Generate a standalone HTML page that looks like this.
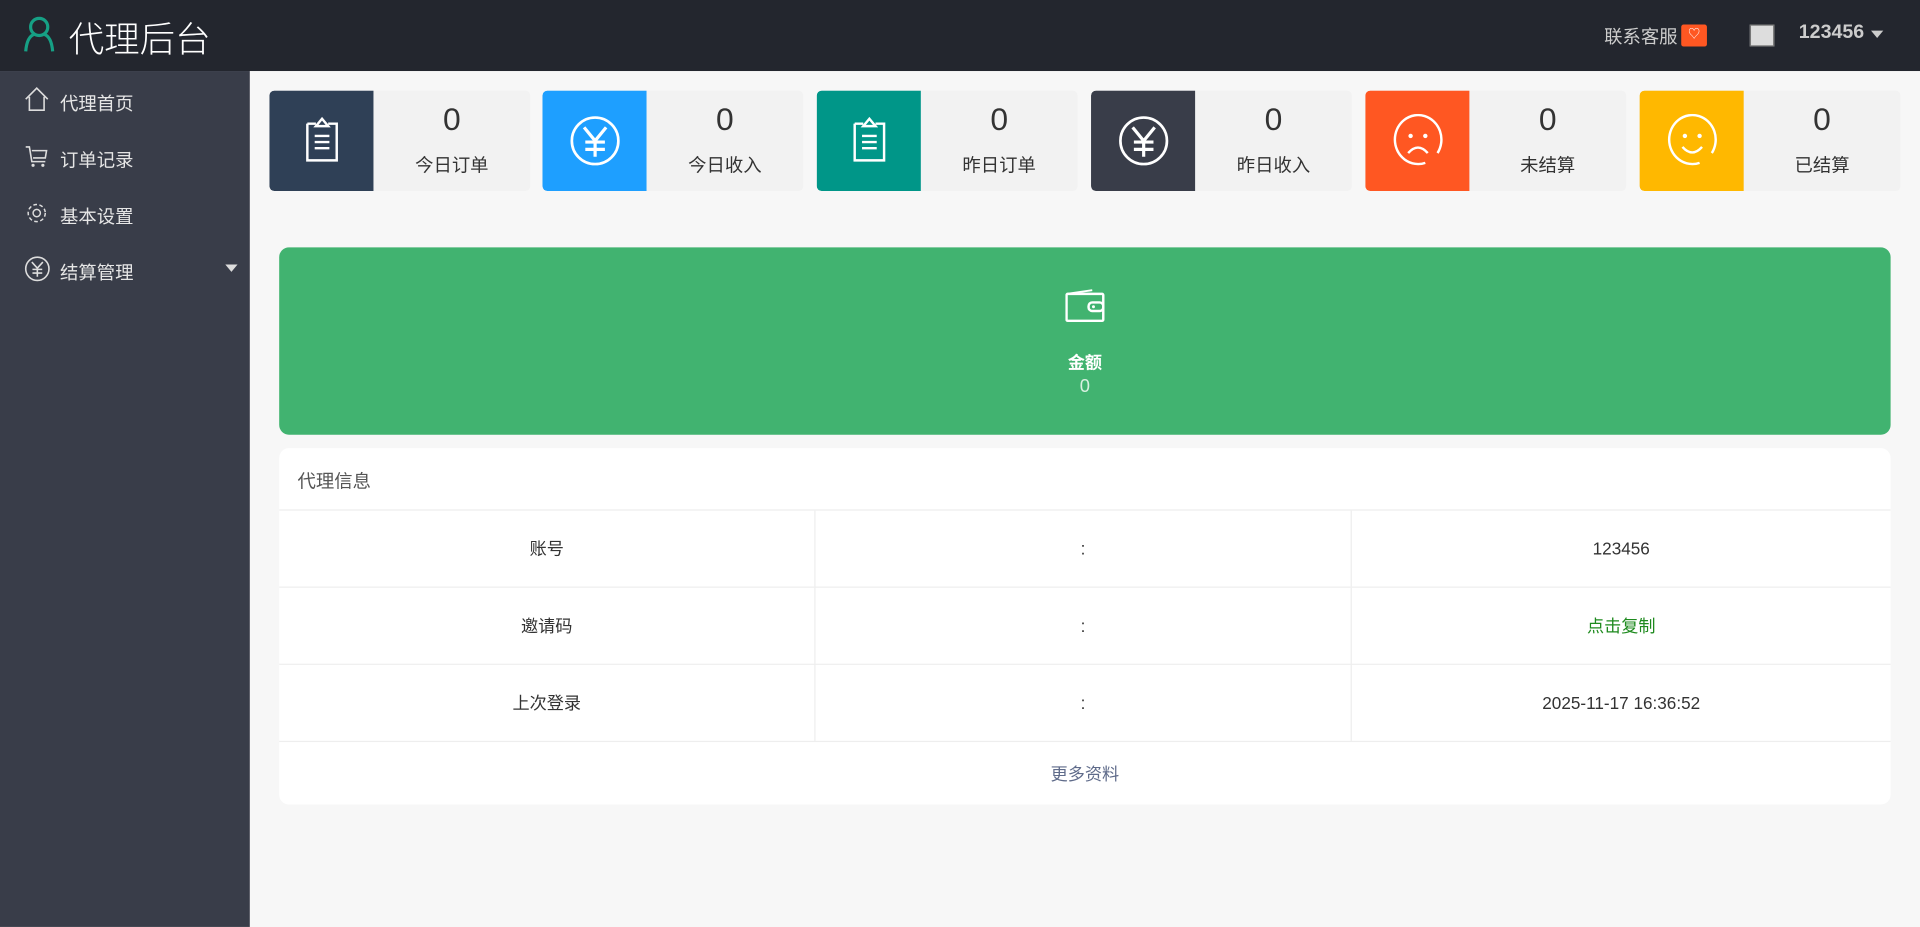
<!DOCTYPE html>
<html><head><meta charset="utf-8"><style>
*{margin:0;padding:0;box-sizing:border-box}
html,body{width:1920px;height:927px;overflow:hidden;background:#f7f7f7}
#w{width:1568px;height:757px;transform:scale(1.22449);transform-origin:0 0;position:relative;font-family:"Liberation Sans","Noto Sans CJK SC",sans-serif;background:#f7f7f7}
.hd{position:absolute;left:0;top:0;width:1568px;height:58px;background:#23262e;color:#fff}
.logo{position:absolute;left:56px;top:9px;font-size:29px;color:#fff;font-weight:300}
.sb{position:absolute;left:0;top:58px;width:204px;height:699px;background:#393d49}
.mi{position:absolute;left:49px;font-size:15px;color:#e6e6e6}
.ic{position:absolute;left:20px}
.card{position:absolute;top:74px;width:213px;height:82px;background:#f2f2f2;border-radius:4px;overflow:hidden}
.card .b{position:absolute;left:0;top:0;width:85px;height:82px;border-radius:4px 0 0 4px}
.card .n{position:absolute;left:85px;right:0;top:8px;text-align:center;font-size:26px;color:#333}
.card .t{position:absolute;left:85px;right:0;top:50px;text-align:center;font-size:15px;color:#333}
.card svg{position:absolute;left:21px;top:19px}
.green{position:absolute;left:228px;top:202px;width:1316px;height:153px;background:#41b370;border-radius:8px;color:#fff;text-align:center}
.info{position:absolute;left:228px;top:366px;width:1316px;height:291px;background:#fff;border-radius:8px}
.row{position:absolute;left:0;width:1316px;height:63px;border-top:1px solid #eee;font-size:14px;color:#333}
.row div{position:absolute;top:0;height:63px;line-height:63px;text-align:center}
.c1{left:0;width:438px;border-right:1px solid #eee}.c2{left:438px;width:438px;border-right:1px solid #eee}.c3{left:876px;width:440px}
</style></head><body><div id="w">
<div class="hd">
<svg style="position:absolute;left:19px;top:13px" width="26" height="30" viewBox="0 0 26 30"><circle cx="13" cy="9" r="7" fill="none" stroke="#16a085" stroke-width="2.6"/><path d="M2 29 Q3 17 9 15 M24 29 Q23 17 17 15" fill="none" stroke="#16a085" stroke-width="2.6"/></svg>
<div class="logo">代理后台</div>
<div style="position:absolute;left:1310px;top:19px;font-size:15px;color:#ccc">联系客服</div>
<div style="position:absolute;left:1373px;top:20px;width:21px;height:18px;background:#ff5722;border-radius:2px;color:#fff;font-size:10px;text-align:center;line-height:18px">♡</div>
<div style="position:absolute;left:1429px;top:20px;width:20px;height:18px;border:1px solid #777;background:#ddd"></div>
<div style="position:absolute;left:1469px;top:18px;font-size:16px;font-weight:bold;color:#ccc">123456</div>
<div style="position:absolute;left:1528px;top:25px;border:5px solid transparent;border-top:6px solid #ccc"></div>
</div>
<div class="sb">
<svg class="ic" style="top:13px" width="20" height="20" viewBox="0 0 20 20"><path d="M1 10 L10 1 L19 10 M4 8 V19 H16 V8" fill="none" stroke="#ddd" stroke-width="1.3"/></svg>
<div class="mi" style="top:16px">代理首页</div>
<svg class="ic" style="top:60px" width="20" height="20" viewBox="0 0 20 20"><path d="M1 2 H4 L6 14 H17 M6 5 H18 L17 11 H7" fill="none" stroke="#ddd" stroke-width="1.3"/><circle cx="7" cy="17" r="1.3" fill="#ddd"/><circle cx="15" cy="17" r="1.3" fill="#ddd"/></svg>
<div class="mi" style="top:62px">订单记录</div>
<svg class="ic" style="top:106px" width="20" height="20" viewBox="0 0 20 20"><circle cx="10" cy="10" r="3" fill="none" stroke="#ddd" stroke-width="1.2"/><circle cx="10" cy="10" r="7" fill="none" stroke="#ddd" stroke-width="1.2" stroke-dasharray="3 2"/></svg>
<div class="mi" style="top:108px">基本设置</div>
<svg class="ic" style="top:151px" width="21" height="21" viewBox="0 0 21 21"><circle cx="10.5" cy="10.5" r="9.5" fill="none" stroke="#ddd" stroke-width="1.3"/><path d="M6 5 L10.5 10 L15 5 M10.5 10 V17 M6.5 11 H14.5 M6.5 14 H14.5" fill="none" stroke="#ddd" stroke-width="1.3"/></svg>
<div class="mi" style="top:154px">结算管理</div>
<div style="position:absolute;left:184px;top:158px;border:5px solid transparent;border-top:6px solid #ddd"></div>
</div>

<div class="card" style="left:220px"><div class="b" style="background:#2f4056"><svg width="44" height="44" viewBox="0 0 44 44"><path d="M10 8 H17 M27 8 H34 V38 H10 V8" fill="none" stroke="#fff" stroke-width="2"/><path d="M17 10 L22 4 L27 10 Z" fill="none" stroke="#fff" stroke-width="2"/><path d="M16 18 H28 M16 23 H28 M16 28 H28" stroke="#fff" stroke-width="2"/></svg></div><div class="n">0</div><div class="t">今日订单</div></div>
<div class="card" style="left:443px"><div class="b" style="background:#1e9fff"><svg width="44" height="44" viewBox="0 0 44 44"><circle cx="22" cy="22" r="19" fill="none" stroke="#fff" stroke-width="2.2"/><path d="M13 11 L22 22 L31 11 M22 22 V35 M14 23 H30 M14 29 H30" fill="none" stroke="#fff" stroke-width="2.6"/></svg></div><div class="n">0</div><div class="t">今日收入</div></div>
<div class="card" style="left:667px"><div class="b" style="background:#009688"><svg width="44" height="44" viewBox="0 0 44 44"><path d="M10 8 H17 M27 8 H34 V38 H10 V8" fill="none" stroke="#fff" stroke-width="2"/><path d="M17 10 L22 4 L27 10 Z" fill="none" stroke="#fff" stroke-width="2"/><path d="M16 18 H28 M16 23 H28 M16 28 H28" stroke="#fff" stroke-width="2"/></svg></div><div class="n">0</div><div class="t">昨日订单</div></div>
<div class="card" style="left:891px"><div class="b" style="background:#393d49"><svg width="44" height="44" viewBox="0 0 44 44"><circle cx="22" cy="22" r="19" fill="none" stroke="#fff" stroke-width="2.2"/><path d="M13 11 L22 22 L31 11 M22 22 V35 M14 23 H30 M14 29 H30" fill="none" stroke="#fff" stroke-width="2.6"/></svg></div><div class="n">0</div><div class="t">昨日收入</div></div>
<div class="card" style="left:1115px"><div class="b" style="background:#ff5722"><svg width="44" height="44" viewBox="0 0 44 44"><path d="M28 40 A19 20 0 1 1 38 32" fill="none" stroke="#fff" stroke-width="2"/><circle cx="16" cy="18" r="1.8" fill="#fff"/><circle cx="28" cy="18" r="1.8" fill="#fff"/><path d="M14 32 Q22 23 30 32" fill="none" stroke="#fff" stroke-width="2"/></svg></div><div class="n">0</div><div class="t">未结算</div></div>
<div class="card" style="left:1339px"><div class="b" style="background:#ffb800"><svg width="44" height="44" viewBox="0 0 44 44"><path d="M28 40 A19 20 0 1 1 38 32" fill="none" stroke="#fff" stroke-width="2"/><circle cx="16" cy="18" r="1.8" fill="#fff"/><circle cx="28" cy="18" r="1.8" fill="#fff"/><path d="M14 27 Q22 36 30 27" fill="none" stroke="#fff" stroke-width="2"/></svg></div><div class="n">0</div><div class="t">已结算</div></div>

<div class="green">
<svg style="position:absolute;left:642px;top:34px" width="32" height="28" viewBox="0 0 32 28"><rect x="1" y="4" width="30" height="22" rx="1" fill="none" stroke="#fff" stroke-width="2"/><path d="M1 4 L22 1" stroke="#fff" stroke-width="1.5"/><rect x="19" y="11" width="12" height="7" rx="3" fill="none" stroke="#fff" stroke-width="2"/><circle cx="23" cy="14.5" r="1.2" fill="#fff"/></svg>
<div style="position:absolute;left:0;right:0;top:84px;font-size:14px;font-weight:bold">金额</div>
<div style="position:absolute;left:0;right:0;top:105px;font-size:15px;color:#d8f0e0">0</div>
</div>

<div class="info">
<div style="position:absolute;left:15px;top:16px;font-size:15px;color:#555">代理信息</div>
<div class="row" style="top:50px"><div class="c1">账号</div><div class="c2">:</div><div class="c3">123456</div></div>
<div class="row" style="top:113px"><div class="c1">邀请码</div><div class="c2">:</div><div class="c3" style="color:#1e8a1e">点击复制</div></div>
<div class="row" style="top:176px"><div class="c1">上次登录</div><div class="c2">:</div><div class="c3">2025-11-17 16:36:52</div></div>
<div class="row" style="top:239px;height:52px;line-height:52px;text-align:center;color:#5f6b8a">更多资料</div>
</div>
</div></body></html>
